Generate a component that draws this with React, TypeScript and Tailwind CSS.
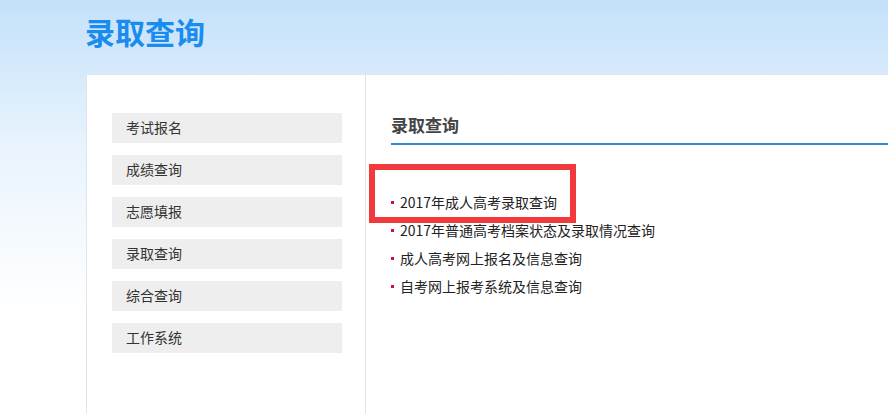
import React from 'react';

const sideLinks = ['考试报名', '成绩查询', '志愿填报', '录取查询', '综合查询', '工作系统'];

const queryLinks = [
  '2017年成人高考录取查询',
  '2017年普通高考档案状态及录取情况查询',
  '成人高考网上报名及信息查询',
  '自考网上报考系统及信息查询',
];

const App: React.FC = () => {
  return (
    <div
      className="w-[888px] h-[414px] overflow-hidden bg-linear-to-b from-[#c4e1fa] via-[#e8f3fd] via-[35%] to-white to-[75%]"
      style={{ fontFamily: '"Microsoft YaHei", "Noto Sans CJK SC", "Liberation Sans", sans-serif' }}
    >
      {/* page title */}
      <div className="h-[74px] pl-[85px] pt-[11px]">
        <h1 className="text-[30px] leading-[40px] font-bold text-[#1a8cf0]">录取查询</h1>
      </div>

      {/* main panel */}
      <div className="ml-[86px] h-[340px] flex bg-white border-l border-t border-[#dfe5ec]">
        {/* sidebar */}
        <aside className="w-[279px] shrink-0 border-r border-[#e2e2e2] pl-[25px] pt-[38px] flex flex-col gap-[12px]">
          {sideLinks.map((name) => (
            <div key={name} className="w-[230px] h-[30px] bg-[#eeeeee] pl-[14px] text-[14px] leading-[29px] text-[#333333]">
              {name}
            </div>
          ))}
        </aside>

        {/* content */}
        <section className="relative flex-1 pl-[25px] pt-[40px]">
          <div className="h-[30px] border-b-2 border-[#2e8bd3] text-[17px] leading-[20px] font-bold text-[#444444]">
            录取查询
          </div>

          <ul className="mt-[43px] flex flex-col">
            {queryLinks.map((text) => (
              <li key={text} className="h-[28px] flex items-center gap-[6px] text-[14px] leading-[20px] text-[#222222]">
                <span className="w-[3px] h-[3px] bg-[#d4103a] shrink-0 mt-[1px]" />
                <span className="-mt-[1px]">{text}</span>
              </li>
            ))}
          </ul>

          {/* red annotation frame */}
          <div className="absolute left-[3px] top-[89px] w-[207px] h-[59px] border-[6px] border-[#f2393c]" />
        </section>
      </div>
    </div>
  );
};

export default App;
